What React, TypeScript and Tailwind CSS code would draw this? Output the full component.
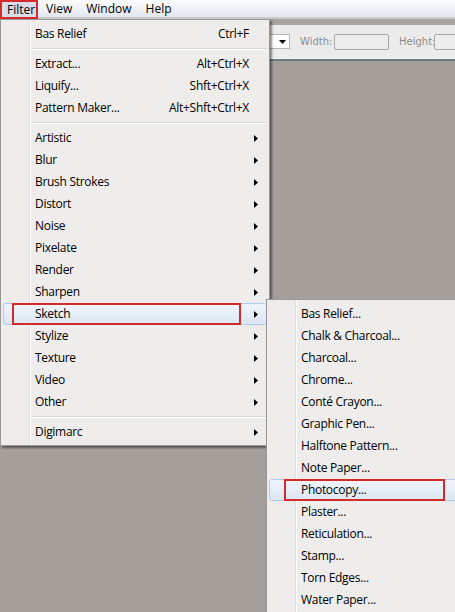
const font = { fontFamily: "'Open Sans', 'Noto Sans', sans-serif" };

type Item = { label: string; shortcut?: string; sub?: boolean } | "sep";

const mainItems: Item[] = [
  { label: "Bas Relief", shortcut: "Ctrl+F" },
  "sep",
  { label: "Extract...", shortcut: "Alt+Ctrl+X" },
  { label: "Liquify...", shortcut: "Shft+Ctrl+X" },
  { label: "Pattern Maker...", shortcut: "Alt+Shft+Ctrl+X" },
  "sep",
  { label: "Artistic", sub: true },
  { label: "Blur", sub: true },
  { label: "Brush Strokes", sub: true },
  { label: "Distort", sub: true },
  { label: "Noise", sub: true },
  { label: "Pixelate", sub: true },
  { label: "Render", sub: true },
  { label: "Sharpen", sub: true },
  { label: "Sketch", sub: true },
  { label: "Stylize", sub: true },
  { label: "Texture", sub: true },
  { label: "Video", sub: true },
  { label: "Other", sub: true },
  "sep",
  { label: "Digimarc", sub: true },
];

const sketchItems = [
  "Bas Relief...",
  "Chalk & Charcoal...",
  "Charcoal...",
  "Chrome...",
  "Conté Crayon...",
  "Graphic Pen...",
  "Halftone Pattern...",
  "Note Paper...",
  "Photocopy...",
  "Plaster...",
  "Reticulation...",
  "Stamp...",
  "Torn Edges...",
  "Water Paper...",
];

function Arrow() {
  return (
    <svg width="4" height="7" viewBox="0 0 4 7" className="shrink-0">
      <path d="M0 0 L4 3.5 L0 7 Z" fill="#000" />
    </svg>
  );
}

function Row({ label, shortcut, sub, active, boxed }: { label: string; shortcut?: string; sub?: boolean; active?: boolean; boxed?: string }) {
  return (
    <div className="relative h-[22px] flex items-center">
      {active && (
        <div className="absolute inset-y-0 left-[2px] right-[2px] rounded-[3px] border border-[#aecbee] bg-gradient-to-b from-[#f1f5fb] to-[#dbe6f4]" />
      )}
      {boxed && <div className={`absolute inset-y-0 border-2 border-[#d42a2a] ${boxed}`} />}
      <span className="relative pl-[34px] flex-1 text-[12px] tracking-[-0.3px] text-black">{label}</span>
      {shortcut && <span className="relative pr-[20px] text-[12px] tracking-[-0.3px] text-black">{shortcut}</span>}
      {sub && (
        <span className="relative pr-[11px]">
          <Arrow />
        </span>
      )}
    </div>
  );
}

function Sep() {
  return (
    <div className="h-[8px] flex flex-col justify-center pl-[30px] pr-[2px]">
      <div className="h-px bg-[#d5d5d5]" />
      <div className="h-px bg-white" />
    </div>
  );
}

export default function App() {
  return (
    <div className="relative w-[455px] h-[612px] overflow-hidden bg-[#a49f9a]" style={font}>
      {/* Menu bar */}
      <div className="h-[17px] flex items-center bg-gradient-to-b from-[#fbfcfd] to-[#e3e7ee] text-[12px] text-black">
        <div className="relative h-[19px] w-[38px] shrink-0 self-start flex items-center pl-[6px] bg-[#d8dde7] border-2 border-[#d42a2a] -mb-[2px] z-10">
          <span className="-ml-[1px]">Filter</span>
        </div>
        <span className="ml-[8px]">View</span>
        <span className="ml-[14px]">Window</span>
        <span className="ml-[14px]">Help</span>
      </div>
      <div className="h-[2px] bg-[#c9c9c9]" />
      <div className="h-[6px] bg-[#a8a39e]" />

      {/* Options bar */}
      <div className="h-[33px] bg-[#ebebeb] flex items-center text-[10px] text-[#8c8c8c]" style={{ fontFamily: "'DejaVu Sans', sans-serif" }}>
        <div className="ml-[199px] w-[91px] h-[15px] shrink-0 bg-white border border-[#b5b5b5] flex items-center justify-end pr-[3px]">
          <svg width="7" height="4" viewBox="0 0 7 4">
            <path d="M0 0 H7 L3.5 4 Z" fill="#000" />
          </svg>
        </div>
        <span className="ml-[10px] w-[34px] shrink-0">Width:</span>
        <div className="w-[55px] h-[16px] shrink-0 rounded-[2px] border border-[#a9a9a9] bg-[#ededed]" />
        <span className="ml-[10px] w-[35px] shrink-0">Height:</span>
        <div className="w-[40px] h-[16px] shrink-0 rounded-[2px] border border-[#a9a9a9] bg-[#ededed]" />
      </div>
      <div className="h-[1px] bg-[#f4f4f4]" />
      <div className="h-[2px] bg-[#6a7a82]" />

      {/* Filter menu */}
      <div className="absolute left-0 top-[19px] w-[270px] pt-[3px] pb-[2px] bg-[#eeedeb] border border-[#979797] shadow-[2px_2px_2px_rgba(0,0,0,0.45)]">
        <div className="absolute left-[28px] top-0 bottom-0 w-px bg-[#e0dfdd]" />
        <div className="absolute left-[29px] top-0 bottom-0 w-px bg-white" />
        {mainItems.map((it, i) =>
          it === "sep" ? (
            <Sep key={i} />
          ) : (
            <Row
              key={i}
              label={it.label}
              shortcut={it.shortcut}
              sub={it.sub}
              active={it.label === "Sketch"}
              boxed={it.label === "Sketch" ? "left-[11px] w-[229px]" : undefined}
            />
          )
        )}
      </div>

      {/* Sketch submenu */}
      <div className="absolute left-[266px] top-[299px] w-[200px] pt-[3px] pb-[3px] bg-[#eeedeb] border border-[#979797] shadow-[2px_2px_2px_rgba(0,0,0,0.45)]">
        <div className="absolute left-[28px] top-0 bottom-0 w-px bg-[#e0dfdd]" />
        <div className="absolute left-[29px] top-0 bottom-0 w-px bg-white" />
        {sketchItems.map((s) => (
          <Row
            key={s}
            label={s}
            active={s === "Photocopy..."}
            boxed={s === "Photocopy..." ? "left-[17px] w-[161px]" : undefined}
          />
        ))}
      </div>
    </div>
  );
}
